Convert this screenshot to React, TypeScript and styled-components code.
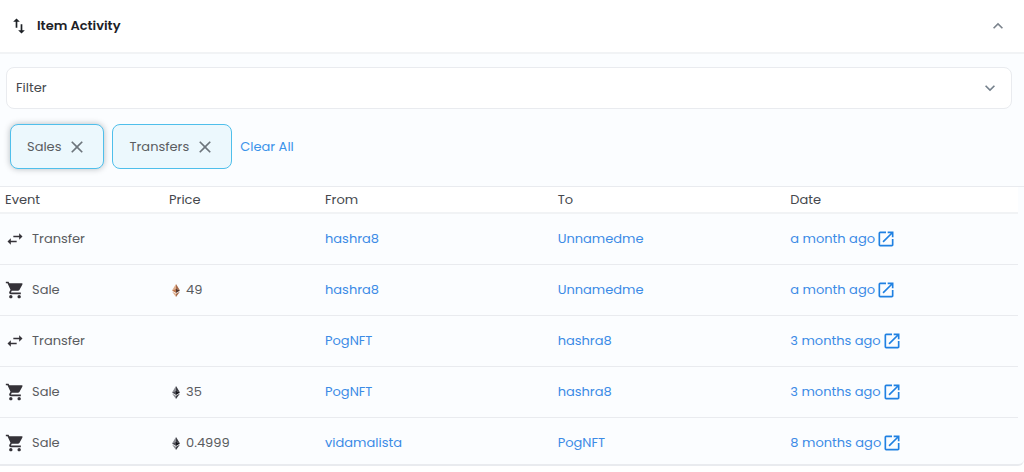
import React, { useState } from "react";
import styled, { createGlobalStyle, css } from "styled-components";
import {
  MdClose,
  MdKeyboardArrowDown,
  MdKeyboardArrowUp,
  MdOpenInNew,
  MdShoppingCart,
  MdSwapHoriz,
  MdSwapVert,
} from "react-icons/md";

const line = "#e9ebef";
const blue = "#3c8be6";

const GlobalStyle = createGlobalStyle`
  * { box-sizing: border-box; }
  body {
    margin: 0;
    background: #fff;
    color: #5a5c60;
    font: 400 13px/20px Poppins, Inter, "Liberation Sans", sans-serif;
  }
  button { font: inherit; cursor: pointer; }
`;

const Panel = styled.section`
  border-bottom: 2px solid ${line};
  border-radius: 0 6px 6px 0;
  background: #fbfdff;
  overflow: hidden;
`;

const PanelHeader = styled.button`
  display: flex;
  align-items: center;
  gap: 8px;
  width: 100%;
  height: 54px;
  padding: 0 16px 0 9px;
  border: 0;
  border-bottom: 2px solid #f1f3f5;
  background: #fff;
  color: #1d2126;
  font-weight: 600;
  text-align: left;

  svg:last-child {
    color: #7b838c;
  }
`;

const Grow = styled.span`
  flex: 1;
`;

const FilterBar = styled.div`
  padding: 13px 12px 15px 6px;
`;

const FilterButton = styled.button`
  display: flex;
  align-items: center;
  width: 100%;
  height: 42px;
  padding: 0 11px 0 9px;
  border: 1px solid ${line};
  border-radius: 8px;
  background: #fff;
  color: #45484d;
  text-align: left;

  svg {
    color: #74808c;
  }
`;

const Chips = styled.div`
  display: flex;
  align-items: center;
  gap: 8px;
  padding: 0 10px 17px;
`;

const Chip = styled.button<{ $focused?: boolean }>`
  display: flex;
  align-items: center;
  gap: 6px;
  height: 45px;
  padding: 0 16px;
  border: 1px solid #4fbfeb;
  border-radius: 8px;
  background: #ecf8fd;
  color: #5a5d61;
  ${(p) =>
    p.$focused &&
    css`
      box-shadow: 0 0 6px rgba(4, 17, 29, 0.28);
    `}

  svg {
    color: #6d757c;
  }
`;

const ClearButton = styled.button`
  padding: 0;
  border: 0;
  background: none;
  color: #3b93ea;
`;

const TableArea = styled.div`
  padding-right: 6px;
  border-top: 1px solid ${line};
`;

const Table = styled.table`
  width: 100%;
  table-layout: fixed;
  border-collapse: separate;
  border-spacing: 0;
`;

const Column = styled.col<{ $width?: number }>`
  width: ${(p) => (p.$width ? `${p.$width}px` : "auto")};
`;

const HeadCell = styled.th`
  height: 27px;
  padding: 0 5px;
  border-bottom: 2px solid #f1f3f5;
  background: #fff;
  color: #45484d;
  font-weight: 400;
  text-align: left;
`;

const Row = styled.tr`
  & > td {
    padding: 15px 5px;
    border-bottom: 1px solid ${line};
  }
  &:last-child > td {
    padding-bottom: 11px;
    border-bottom: 0;
  }
`;

const CellContent = styled.div<{ $gap: number }>`
  display: flex;
  align-items: center;
  gap: ${(p) => p.$gap}px;
`;

const EventIcon = styled.span`
  display: flex;
  color: #343238;
`;

const TextLink = styled.a`
  display: inline-flex;
  align-items: center;
  gap: 1px;
  color: ${blue};
  text-decoration: none;
  vertical-align: top;

  svg {
    color: #2081e2;
  }
`;

const palettes = {
  dark: ["#8b8d93", "#3b3c43", "#4c4d55", "#15161b"],
  bronze: ["#dfae8c", "#a5694a", "#c07a50", "#54362c"],
};

function Ether({ tone }: { tone: keyof typeof palettes }) {
  const [a, b, c, d] = palettes[tone];
  return (
    <svg width="14" height="14" viewBox="0 0 14 14" aria-hidden="true">
      <path d="M7 1 3 7.6 7 5.8z" fill={a} />
      <path d="M7 1 11 7.6 7 5.8z" fill={b} />
      <path d="M7 5.8 3 7.6 7 10z" fill={c} />
      <path d="M7 5.8 11 7.6 7 10z" fill={d} />
      <path d="M3 8.5 7 10.8V14z" fill={a} />
      <path d="M11 8.5 7 10.8V14z" fill={b} />
    </svg>
  );
}

type Activity = {
  event: "Transfer" | "Sale";
  price?: string;
  tone?: keyof typeof palettes;
  from: string;
  to: string;
  date: string;
};

const activities: Activity[] = [
  { event: "Transfer", from: "hashra8", to: "Unnamedme", date: "a month ago" },
  { event: "Sale", price: "49", tone: "bronze", from: "hashra8", to: "Unnamedme", date: "a month ago" },
  { event: "Transfer", from: "PogNFT", to: "hashra8", date: "3 months ago" },
  { event: "Sale", price: "35", tone: "dark", from: "PogNFT", to: "hashra8", date: "3 months ago" },
  { event: "Sale", price: "0.4999", tone: "dark", from: "vidamalista", to: "PogNFT", date: "8 months ago" },
];

export default function App() {
  const [open, setOpen] = useState(true);
  const [filters, setFilters] = useState(["Sales", "Transfers"]);

  return (
    <>
      <GlobalStyle />
      <Panel>
        <PanelHeader aria-expanded={open} onClick={() => setOpen(!open)}>
          <MdSwapVert size={20} />
          <Grow>Item Activity</Grow>
          {open ? <MdKeyboardArrowUp size={20} /> : <MdKeyboardArrowDown size={20} />}
        </PanelHeader>
        {open && (
          <>
            <FilterBar>
              <FilterButton>
                <Grow>Filter</Grow>
                <MdKeyboardArrowDown size={20} />
              </FilterButton>
            </FilterBar>
            {filters.length > 0 && (
              <Chips>
                {filters.map((name) => (
                  <Chip
                    key={name}
                    $focused={name === "Sales"}
                    onClick={() => setFilters(filters.filter((f) => f !== name))}
                  >
                    {name}
                    <MdClose size={20} />
                  </Chip>
                ))}
                <ClearButton onClick={() => setFilters([])}>Clear All</ClearButton>
              </Chips>
            )}
            <TableArea>
              <Table>
                <colgroup>
                  <Column $width={164} />
                  <Column $width={156} />
                  <Column />
                  <Column />
                  <Column />
                </colgroup>
                <thead>
                  <tr>
                    {["Event", "Price", "From", "To", "Date"].map((h) => (
                      <HeadCell key={h} scope="col">{h}</HeadCell>
                    ))}
                  </tr>
                </thead>
                <tbody>
                  {activities.map((a, i) => (
                    <Row key={i}>
                      <td>
                        <CellContent $gap={7}>
                          <EventIcon>
                            {a.event === "Sale" ? <MdShoppingCart size={20} /> : <MdSwapHoriz size={20} />}
                          </EventIcon>
                          {a.event}
                        </CellContent>
                      </td>
                      <td>
                        {a.price && a.tone && (
                          <CellContent $gap={3}>
                            <Ether tone={a.tone} />
                            {a.price}
                          </CellContent>
                        )}
                      </td>
                      <td><TextLink href="#">{a.from}</TextLink></td>
                      <td><TextLink href="#">{a.to}</TextLink></td>
                      <td>
                        <TextLink href="#">
                          {a.date}
                          <MdOpenInNew size={20} />
                        </TextLink>
                      </td>
                    </Row>
                  ))}
                </tbody>
              </Table>
            </TableArea>
          </>
        )}
      </Panel>
    </>
  );
}
